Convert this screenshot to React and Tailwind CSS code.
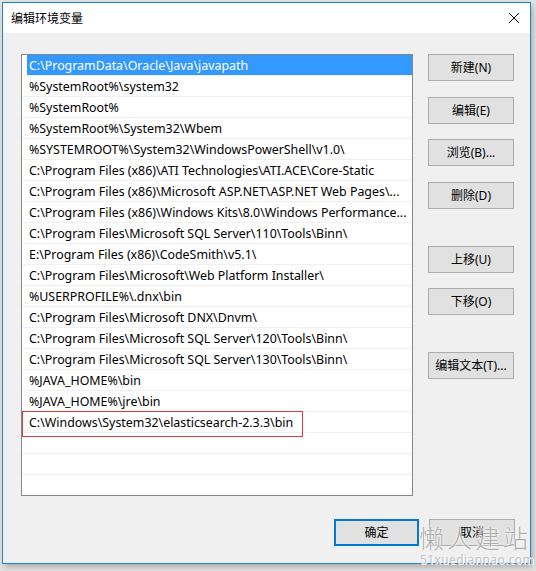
import React from "react";

const items = [
  "C:\\ProgramData\\Oracle\\Java\\javapath",
  "%SystemRoot%\\system32",
  "%SystemRoot%",
  "%SystemRoot%\\System32\\Wbem",
  "%SYSTEMROOT%\\System32\\WindowsPowerShell\\v1.0\\",
  "C:\\Program Files (x86)\\ATI Technologies\\ATI.ACE\\Core-Static",
  "C:\\Program Files (x86)\\Microsoft ASP.NET\\ASP.NET Web Pages\\...",
  "C:\\Program Files (x86)\\Windows Kits\\8.0\\Windows Performance...",
  "C:\\Program Files\\Microsoft SQL Server\\110\\Tools\\Binn\\",
  "E:\\Program Files (x86)\\CodeSmith\\v5.1\\",
  "C:\\Program Files\\Microsoft\\Web Platform Installer\\",
  "%USERPROFILE%\\.dnx\\bin",
  "C:\\Program Files\\Microsoft DNX\\Dnvm\\",
  "C:\\Program Files\\Microsoft SQL Server\\120\\Tools\\Binn\\",
  "C:\\Program Files\\Microsoft SQL Server\\130\\Tools\\Binn\\",
  "%JAVA_HOME%\\bin",
  "%JAVA_HOME%\\jre\\bin",
  "C:\\Windows\\System32\\elasticsearch-2.3.3\\bin",
  "",
  "",
  "",
];

const font = { fontFamily: "'Noto Sans', 'Noto Sans CJK SC', sans-serif" };

function Btn({ children, className = "" }) {
  return (
    <div
      className={
        "w-[86px] h-[27px] flex items-center justify-center border border-[#adadad] bg-[#e1e1e1] text-[12px] text-black " +
        className
      }
    >
      {children}
    </div>
  );
}

export default function App() {
  return (
    <div
      className="w-[536px] h-[571px] bg-[#e4e4e4] overflow-hidden relative"
      style={font}
    >
      <div className="ml-[2px] mt-[2px] w-[529px] h-[562px] border border-[#1a86d8] bg-[#f0f0f0] flex flex-col shadow-[2px_3px_6px_rgba(0,0,0,0.25)]">
        {/* Title bar */}
        <div className="h-[30px] bg-white flex items-center justify-between pl-[8px] pr-[10px]">
          <span className="text-[12px] text-black font-['Noto_Sans_CJK_SC',sans-serif]">编辑环境变量</span>
          <svg width="12" height="12" viewBox="0 0 12 12">
            <path d="M1 1 L11 11 M11 1 L1 11" stroke="#000" strokeWidth="1" />
          </svg>
        </div>
        {/* Body */}
        <div className="flex pl-[18px] pt-[21px]">
          <div className="w-[392px] h-[442px] border border-[#828790] bg-white overflow-hidden">
            {items.map((t, i) => (
              <div
                key={i}
                className="relative h-[21px] border-b border-[#f0f0f0] flex"
              >
                {i === 0 ? (
                  <div className="ml-[5px] flex-1 bg-[#3399ff] text-white text-[12.4px] leading-[20px] pt-[1px] pl-[2px] whitespace-nowrap">
                    {t}
                  </div>
                ) : (
                  <div className="pl-[7px] pt-[1px] text-[12.4px] leading-[20px] text-black whitespace-nowrap">
                    {t}
                  </div>
                )}
                {i === 17 && (
                  <div className="absolute left-0 top-[-1px] w-[281px] h-[26px] border border-[#e53935]" />
                )}
              </div>
            ))}
          </div>
          <div className="ml-[15px] flex flex-col">
            <Btn>新建(N)</Btn>
            <Btn className="mt-[16px]">编辑(E)</Btn>
            <Btn className="mt-[15px]">浏览(B)...</Btn>
            <Btn className="mt-[16px]">删除(D)</Btn>
            <Btn className="mt-[37px]">上移(U)</Btn>
            <Btn className="mt-[15px]">下移(O)</Btn>
            <Btn className="mt-[37px]">编辑文本(T)...</Btn>
          </div>
        </div>
        <div className="flex justify-end gap-[10px] pr-[15px] mt-[23px]">
          <div className="w-[85px] h-[27px] flex items-center justify-center border-2 border-[#0078d7] bg-[#e1e1e1] text-[12px] text-black">
            确定
          </div>
          <Btn>取消</Btn>
        </div>
      </div>
      {/* Watermark */}
      <div className="absolute left-[419px] top-[520px] whitespace-nowrap text-[25px] leading-[34px] tracking-[3px] text-[#adadad] font-light [text-shadow:0_0_2px_#fff,0_0_2px_#fff] font-['Noto_Sans_CJK_SC',sans-serif]">
        懒人建站
      </div>
      <div className="absolute left-[420px] top-[553px] whitespace-nowrap text-[12px] leading-[13px] tracking-[0.4px] text-[#c4c4c4] [text-shadow:1px_1px_0_#fff]">
        51xuediannao.com
      </div>
    </div>
  );
}
